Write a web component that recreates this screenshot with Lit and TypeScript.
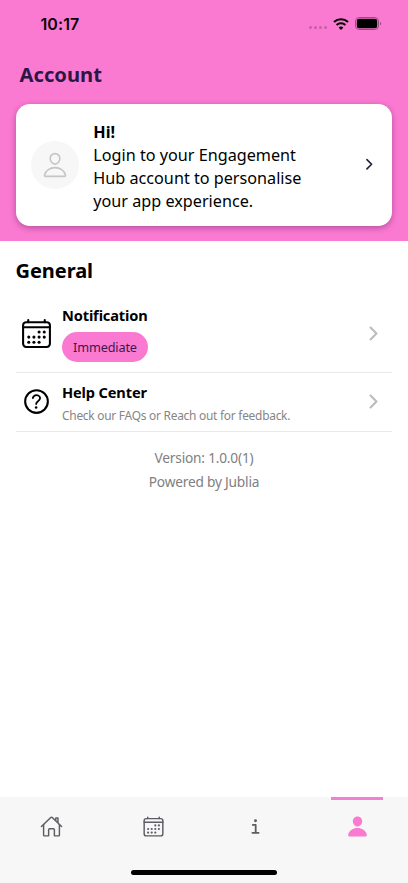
import { LitElement, html, css, svg } from "lit";
import { customElement, property } from "lit/decorators.js";

const shapes = {
  calendar: svg`<g class="line"><rect x="48" y="80" width="416" height="384" rx="48"/><path d="M128 48v32M384 48v32M464 160H48"/></g>
    <circle cx="296" cy="232" r="24"/><circle cx="376" cy="232" r="24"/><circle cx="136" cy="312" r="24"/><circle cx="216" cy="312" r="24"/><circle cx="296" cy="312" r="24"/><circle cx="376" cy="312" r="24"/><circle cx="136" cy="392" r="24"/><circle cx="216" cy="392" r="24"/><circle cx="296" cy="392" r="24"/>`,
  help: svg`<g class="line"><circle cx="256" cy="256" r="176"/><path class="thin" d="M200 202.29s.84-17.5 19.57-32.57C230.68 160.77 244 158.18 256 158c10.93-.14 20.69 1.67 26.53 4.45 10 4.76 29.47 16.38 29.47 41.09 0 26-17 37.81-36.37 50.8S251 281.43 251 296"/></g><circle cx="250" cy="348" r="20"/>`,
  personOutline: svg`<g class="line thin"><path d="M344 144c-3.92 52.87-44 96-88 96s-84.15-43.12-88-96c-4-55 35-96 88-96s92 42 88 96z"/><path d="M256 304c-87 0-175.3 48-191.64 138.6C62.39 453.52 68.57 464 80 464h352c11.44 0 17.62-10.48 15.65-21.4C431.3 352 343 304 256 304z"/></g>`,
  person: svg`<path d="M332.64 64.58C313.18 43.57 286 32 256 32c-30.16 0-57.43 11.5-76.8 32.38-19.58 21.11-29.12 49.8-26.88 80.78C156.76 206.28 203.27 256 256 256s99.16-49.71 103.67-110.82c2.27-30.7-7.33-59.33-27.03-80.6zM432 480H80a31 31 0 01-24.2-11.13c-6.5-7.77-9.12-18.38-7.18-29.11C57.06 392.94 83.4 353.61 124.8 326c36.78-24.51 83.37-38 131.2-38s94.42 13.5 131.2 38c41.4 27.6 67.74 66.93 76.18 113.75 1.94 10.73-.68 21.34-7.18 29.11A31 31 0 01432 480z"/>`,
  home: svg`<g class="line"><path d="M80 212v236a16 16 0 0016 16h96V328a24 24 0 0124-24h80a24 24 0 0124 24v136h96a16 16 0 0016-16V212"/><path d="M480 256L266.89 52c-5-5.28-16.69-5.34-21.78 0L32 256M400 179V64h-48v69"/></g>`,
  info: svg`<g class="line bold"><path d="M196 220h64v172M187 396h138"/></g><circle cx="256" cy="128" r="32"/>`,
  chevron: svg`<g class="line heavy"><path d="M184 112l144 144-144 144"/></g>`,
};

@customElement("ui-icon")
class UiIcon extends LitElement {
  @property() name: keyof typeof shapes = "home";

  static styles = css`
    :host { display: block; flex: none; }
    svg { display: block; width: 100%; height: 100%; fill: currentColor; }
    .line { fill: none; stroke: currentColor; stroke-width: 32; stroke-linecap: round; stroke-linejoin: round; }
    .thin { stroke-width: 28; }
    .bold { stroke-width: 40; }
    .heavy { stroke-width: 52; }
  `;

  render() {
    return html`<svg viewBox="0 0 512 512" aria-hidden="true">${shapes[this.name]}</svg>`;
  }
}

@customElement("status-bar")
class StatusBar extends LitElement {
  static styles = css`
    :host { display: flex; align-items: center; height: 47px; padding: 0 26px 0 40.5px; color: #0a0208; }
    .time { flex: 1; font: 600 16px/20px Inter, sans-serif; letter-spacing: 0.1px; }
    .dots { display: flex; gap: 2px; margin: 8px 6px 0 0; }
    .dots i { width: 3px; height: 3px; border-radius: 50%; background: #c560a6; }
    .wifi { width: 16px; height: 12px; margin-right: 6px; }
    .battery { width: 27px; height: 13px; }
  `;

  render() {
    return html`
      <span class="time">10:17</span>
      <span class="dots"><i></i><i></i><i></i><i></i></span>
      <svg class="wifi" viewBox="0 0 16 12">
        <path d="M1 4.1a10.2 10.2 0 0 1 14 0M3.6 7a6.4 6.4 0 0 1 8.8 0" fill="none" stroke="#000" stroke-width="2.1"/>
        <path d="M8 12l2.4-2.5a3.6 3.6 0 0 0-4.8 0z"/>
      </svg>
      <svg class="battery" viewBox="0 0 27 13">
        <rect x=".5" y=".5" width="23" height="12" rx="3.6" fill="none" stroke="#9d4b85"/>
        <rect x="1.8" y="1.8" width="20.4" height="9.4" rx="2.2"/>
        <path d="M25 4.7v3.6c1.6-.5 1.6-3.1 0-3.6z" fill="#9d4b85"/>
      </svg>`;
  }
}

@customElement("app-root")
class AppRoot extends LitElement {
  static styles = css`
    :host { display: flex; flex-direction: column; height: 883px; box-sizing: border-box; background: #fff; color: #000; font-family: "Noto Sans", sans-serif; overflow: hidden; }
    header { height: 241px; background: #fa7ad1; }
    h1 { margin: 11px 0 0 19.5px; font-size: 20.2px; line-height: 32px; color: #2b1746; }
    .card { display: flex; align-items: center; box-sizing: border-box; height: 122px; margin: 14px 16px 0 15.5px; padding: 0 15px 0 15.5px; border-radius: 14px; background: #fff; box-shadow: 0 2px 6px rgba(90, 20, 80, .42); }
    .avatar { display: grid; place-items: center; width: 48px; height: 48px; border-radius: 50%; background: #f7f7f7; color: #c5c5c5; }
    .avatar ui-icon { width: 28px; height: 28px; }
    .card p { flex: 1; margin: 3px 0 0 14.3px; font-size: 16.2px; line-height: 23px; white-space: nowrap; }
    .card .go { width: 16.5px; height: 16.5px; margin-top: -2.5px; color: #262338; }
    main { flex: 1; padding: 0 16px; }
    h2 { margin: 16px 0 0 -0.5px; font-size: 20px; line-height: 28px; letter-spacing: -0.05px; }
    .row { display: grid; grid-template-columns: 46px 1fr 32px; align-items: center; box-sizing: border-box; border-bottom: 1px solid #e9e9e9; }
    .row.tall { height: 79px; margin-top: 8.5px; padding-top: 1.5px; }
    .row.short { height: 59.5px; }
    .row .lead { width: 33px; height: 33px; margin: 0 0 0 4px; }
    .row .go { width: 21px; height: 21px; margin-left: 2.5px; color: #bcbcbc; }
    h3 { margin: 0; font-size: 14.6px; line-height: 20px; letter-spacing: -0.14px; }
    .tall h3 { padding-top: 1px; }
    .pill { display: flex; align-items: center; justify-content: center; width: 86px; height: 30px; margin-top: 7px; border-radius: 15px; background: #fa7ad1; color: #3d184f; font-size: 12.7px; letter-spacing: -0.15px; }
    .short h3 { padding-top: 3px; }
    .sub { margin-top: 3px; font-size: 11.9px; line-height: 20px; letter-spacing: -0.24px; color: #858585; white-space: nowrap; }
    .about { margin-top: 14px; text-align: center; font-size: 13.7px; line-height: 24px; letter-spacing: -0.2px; color: #808080; }
    nav { display: grid; grid-template: 60px 26px / repeat(4, 1fr); background: #f7f7f7; color: #5c5c62; }
    .tab { display: grid; justify-items: center; align-content: start; grid-template-rows: 3px 23px; row-gap: 15px; }
    .tab ui-icon { width: 23px; height: 23px; }
    .mark { width: 51.5px; height: 3px; }
    .active { color: #fa7ad1; }
    .active .mark { background: #f37fd0; }
    .grip { grid-column: 1 / -1; justify-self: center; width: 146px; height: 5px; margin-top: 13px; border-radius: 3px; background: #000; }
  `;

  render() {
    const tabs = ["home", "calendar", "info", "person"];
    return html`
      <header>
        <status-bar></status-bar>
        <h1>Account</h1>
        <section class="card">
          <div class="avatar"><ui-icon name="personOutline"></ui-icon></div>
          <p><b>Hi!</b><br />Login to your Engagement<br />Hub account to personalise<br />your app experience.</p>
          <ui-icon class="go" name="chevron"></ui-icon>
        </section>
      </header>
      <main>
        <h2>General</h2>
        <div class="row tall">
          <ui-icon class="lead" name="calendar"></ui-icon>
          <div><h3>Notification</h3><div class="pill">Immediate</div></div>
          <ui-icon class="go" name="chevron"></ui-icon>
        </div>
        <div class="row short">
          <ui-icon class="lead" name="help"></ui-icon>
          <div><h3>Help Center</h3><div class="sub">Check our FAQs or Reach out for feedback.</div></div>
          <ui-icon class="go" name="chevron"></ui-icon>
        </div>
        <div class="about">Version: 1.0.0(1)<br />Powered by Jublia</div>
      </main>
      <nav>
        ${tabs.map((t) => html`<div class="tab ${t === "person" ? "active" : ""}"><span class="mark"></span><ui-icon name=${t}></ui-icon></div>`)}
        <div class="grip"></div>
      </nav>`;
  }
}
